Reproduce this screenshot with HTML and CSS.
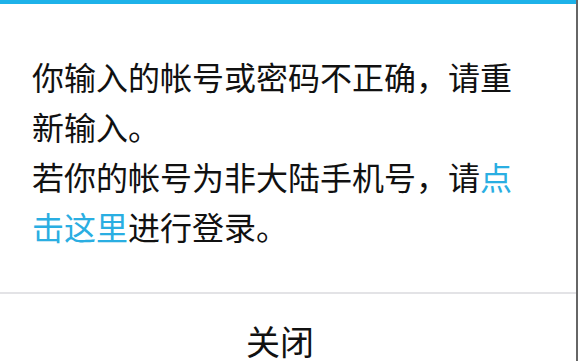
FILE: index.html
```html
<!DOCTYPE html>
<html lang="zh-CN">
<head>
<meta charset="UTF-8">
<meta name="viewport" content="width=device-width, initial-scale=1.0">
<title>登录提示</title>
<link rel="stylesheet" href="styles.css">
</head>
<body>
  <div class="screen">
    <div class="dialog">
      <div class="message">
        你输入的帐号或密码不正确，请重新输入。<br>
        若你的帐号为非大陆手机号，请<a href="#" class="link">点击这里</a>进行登录。
      </div>
      <div class="divider"></div>
      <button class="close">关闭</button>
    </div>
    <div class="edge"></div>
  </div>
</body>
</html>
```

FILE: styles.css
```css
body {
  margin: 0;
  overflow: hidden;
  background: #fff;
  font-family: "Noto Sans CJK SC", "Noto Sans", sans-serif;
}

.screen {
  display: flex;
  height: 100vh;
}

.dialog {
  width: 576px;
  display: flex;
  flex-direction: column;
  border-top: 4px solid #1db2e9;
  background: #fff;
}

.edge {
  width: 2px;
  background: #666;
}

.message {
  padding: 47px 48px 0 32px;
  font-size: 32px;
  line-height: 50px;
  color: #111;
  height: 288px;
  box-sizing: border-box;
  flex-shrink: 0;
}

.link {
  color: #2aaee2;
  text-decoration: none;
}

.divider {
  height: 2px;
  background: #e3e3e6;
  flex-shrink: 0;
}

.close {
  border: none;
  background: none;
  font-family: inherit;
  font-size: 34px;
  color: #111;
  height: 92px;
  padding: 0 16px 0 0;
  flex-shrink: 0;
  text-align: center;
}
```
